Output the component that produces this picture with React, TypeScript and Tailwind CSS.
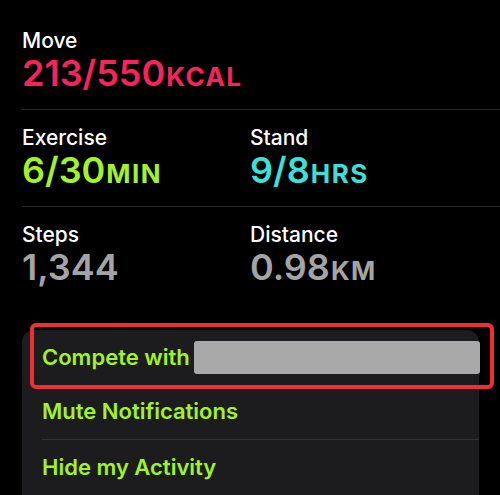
import React from "react"

const font = { fontFamily: "Inter, 'Noto Sans', sans-serif" }

const Stat = ({ label, value, unit, color }: { label: string; value: string; unit?: string; color: string }) => (
  <div>
    <div className="text-[21px] leading-[25px] font-medium text-white">{label}</div>
    <div className={`text-[36px] leading-[40px] font-semibold ${color}`}>
      {value}
      {unit && <span className="text-[26px] leading-[20px] font-bold tracking-[1.5px] ml-[1px]">{unit}</span>}
    </div>
  </div>
)

export default function App() {
  return (
    <div className="relative w-[500px] h-[495px] overflow-hidden bg-black" style={font}>
      {/* Summary */}
      <div className="pt-[28px] pl-[22px]">
        <div className="pb-[16px] border-b border-[#2a2a2c]">
          <Stat label="Move" value="213/550" unit="KCAL" color="text-[#f7245b]" />
        </div>
        <div className="grid grid-cols-[228px_1fr] pt-[15px] pb-[16px] border-b border-[#2a2a2c]">
          <Stat label="Exercise" value="6/30" unit="MIN" color="text-[#a3f227]" />
          <Stat label="Stand" value="9/8" unit="HRS" color="text-[#3ddfd9]" />
        </div>
        <div className="grid grid-cols-[228px_1fr] pt-[15px]">
          <Stat label="Steps" value="1,344" color="text-[#a4a4a6]" />
          <Stat label="Distance" value="0.98" unit="KM" color="text-[#a4a4a6]" />
        </div>
      </div>

      {/* Options card */}
      <div className="ml-[22px] mt-[43px] w-[457px] rounded-t-[12px] bg-[#1c1c1e] pl-[20px]">
        <div className="h-[54px] flex items-center whitespace-nowrap text-[22px] font-semibold text-[#a3f227]">
          <span>Compete with</span>
          <span className="ml-[4px] w-[286px] h-[33px] shrink-0 rounded-[3px] bg-[#a9a9a9]" />
        </div>
        <div className="h-[55px] flex items-center text-[22px] font-semibold text-[#a3f227]">
          Mute Notifications
        </div>
        <div className="h-[56px] flex items-center text-[22px] font-semibold text-[#a3f227] border-t border-[#333336]">
          Hide my Activity
        </div>
      </div>

      {/* highlight annotation */}
      <div className="absolute left-[30px] top-[323px] w-[464px] h-[66px] border-[4px] border-[#ee3034] rounded-[6px]" />
    </div>
  )
}
